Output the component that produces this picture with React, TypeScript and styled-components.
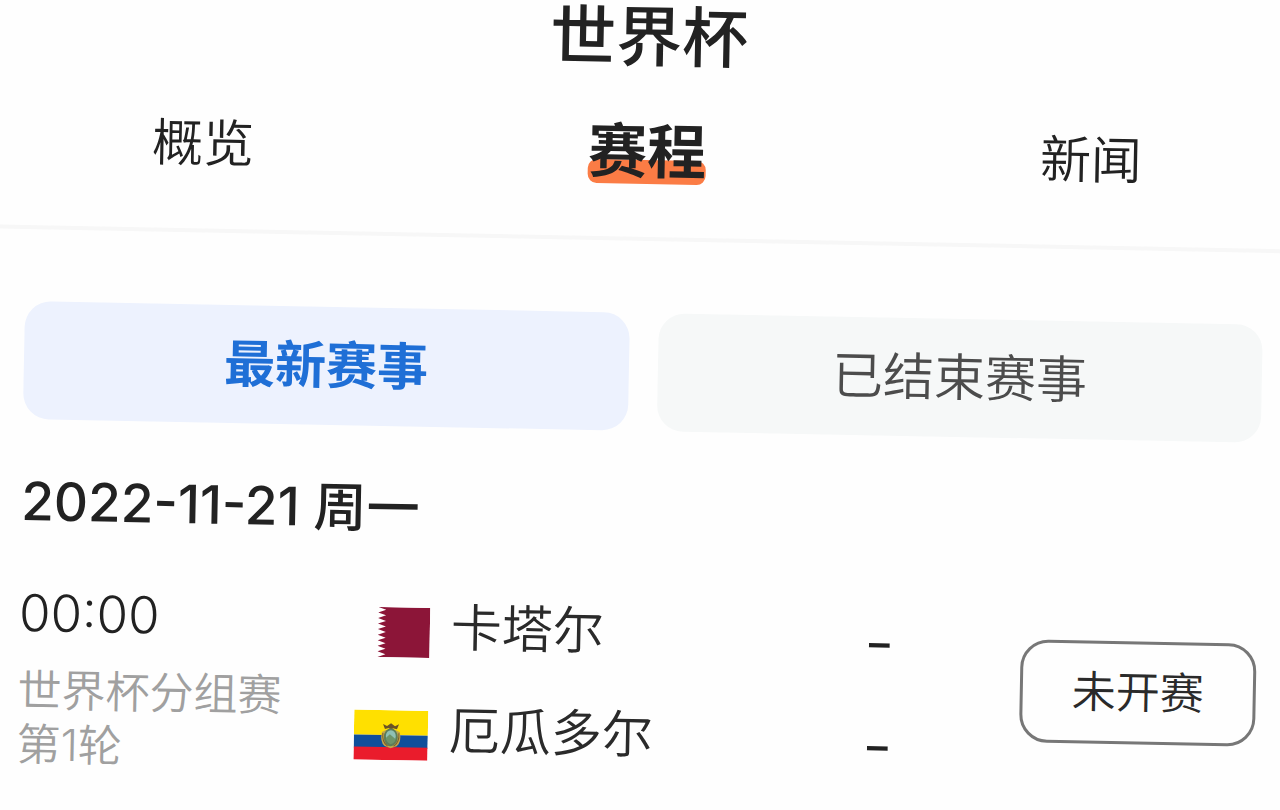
import React from "react";
import styled, { createGlobalStyle } from "styled-components";

const GlobalStyle = createGlobalStyle`
  *, *::before, *::after { box-sizing: border-box; }
  body {
    margin: 0;
    background: #fefefe;
    color: #222;
    font-family: Inter, "Noto Sans CJK SC", sans-serif;
    font-size: 51px;
    line-height: 64px;
  }
`;

const Viewport = styled.div`
  min-height: 100vh;
  overflow: hidden;
`;

/* The whole sheet leans slightly clockwise, so it is a bit wider than the window. */
const Sheet = styled.div`
  width: calc(100% + 20px);
  transform: rotate(1.1deg);
  transform-origin: top center;
`;

const Header = styled.header`
  border-bottom: 4px solid #f7f7f7;
`;

const Title = styled.h1`
  margin: 0;
  font-size: 66px;
  line-height: 74px;
  font-weight: 500;
  text-align: center;
`;

const Tabs = styled.nav`
  display: flex;
  align-items: center;
  justify-content: space-between;
  padding: 46px 155px 53px;
`;

const Tab = styled.a<{ $active?: boolean }>`
  position: relative;
  isolation: isolate;
  color: #222;
  text-decoration: none;
  font-size: ${(p) => (p.$active ? 59 : 51)}px;
  font-weight: ${(p) => (p.$active ? 700 : 350)};

  &::before {
    content: "";
    display: ${(p) => (p.$active ? "block" : "none")};
    position: absolute;
    z-index: -1;
    left: 0;
    right: 0;
    bottom: 0;
    height: 24px;
    border-radius: 9px;
    background: #fb7c45;
  }
`;

const Main = styled.main`
  padding: 72px 31px 16px;
`;

const Filters = styled.div`
  display: grid;
  grid-template-columns: 1fr 1fr;
  gap: 29px;
`;

const Filter = styled.button<{ $active?: boolean }>`
  height: 118px;
  padding: 0;
  border: 0;
  border-radius: 26px;
  font: inherit;
  font-weight: ${(p) => (p.$active ? 700 : 350)};
  color: ${(p) => (p.$active ? "#1f6fd6" : "#4c4c4c")};
  background: ${(p) => (p.$active ? "#edf2fe" : "#f6f8f8")};
`;

const DateHeading = styled.h2`
  margin: 50px 0 40px;
  font-size: 53px;
  font-weight: 500;
`;

const Match = styled.article`
  display: grid;
  grid-template-columns: 336px 1fr 236px;
`;

const Info = styled.div`
  padding-top: 12px;
`;

const Kickoff = styled.time`
  display: block;
  line-height: 56px;
  font-weight: 300;
`;

const Stage = styled.p`
  margin: 22px 0 0;
  font-size: 44px;
  line-height: 54px;
  font-weight: 350;
  color: #a0a0a0;
`;

const Teams = styled.div`
  padding-right: 126px;
`;

const Team = styled.div`
  display: flex;
  align-items: center;
  gap: 21px;
  height: 103px;
`;

const FlagSlot = styled.span`
  display: flex;
  justify-content: flex-end;
  width: 75px;
`;

const Name = styled.span`
  flex: 1;
  padding-bottom: 10px;
  font-weight: 350;
  color: #2a2a2a;
`;

const Score = styled.span`
  font-size: 68px;
  font-weight: 300;
`;

const Status = styled.button`
  align-self: center;
  height: 103px;
  margin-bottom: 10px;
  padding: 0;
  border: 3px solid #777;
  border-radius: 28px;
  background: transparent;
  font: inherit;
  font-size: 44px;
  font-weight: 350;
  color: #2a2a2a;
`;

const QatarFlag = () => (
  <svg width="52" height="50" viewBox="0 0 52 50" role="img" aria-label="卡塔尔国旗">
    <rect width="52" height="50" fill="#fff" />
    <path
      d="M0 0H52V50H0L8 47.2L0 44.4L8 41.7L0 38.9L8 36.1L0 33.3L8 30.6L0 27.8L8 25L0 22.2L8 19.4L0 16.7L8 13.9L0 11.1L8 8.3L0 5.6L8 2.8Z"
      fill="#8c1538"
    />
  </svg>
);

const EcuadorFlag = () => (
  <svg width="74" height="50" viewBox="0 0 74 50" role="img" aria-label="厄瓜多尔国旗">
    <rect width="74" height="25" fill="#ffe000" />
    <rect y="25" width="74" height="13" fill="#104f9b" />
    <rect y="37" width="74" height="13" fill="#ea1c2c" />
    <path d="M28 22Q26 32 31 36L37 38L43 36Q48 32 46 22L42 20H32Z" fill="#c4a64a" />
    <path d="M29 14L33 16L37 13L41 16L45 14L43 19L39 18L37 20L35 18L31 19Z" fill="#6b5324" />
    <ellipse cx="37" cy="27" rx="7" ry="9" fill="#5d7d58" />
    <ellipse cx="37" cy="26" rx="5" ry="6" fill="#8fc0b4" />
    <path d="M32 28L36 24L42 29Q41 33 37 34Q33 33 32 28Z" fill="#6d9468" />
    <path d="M29 23Q28 32 34 36M45 23Q46 32 40 36" fill="none" stroke="#7a5f2c" strokeWidth="1" />
  </svg>
);

export default function App() {
  return (
    <Viewport>
      <GlobalStyle />
      <Sheet>
        <Header>
          <Title>世界杯</Title>
          <Tabs>
            <Tab href="#overview">概览</Tab>
            <Tab href="#schedule" $active aria-current="page">赛程</Tab>
            <Tab href="#news">新闻</Tab>
          </Tabs>
        </Header>
        <Main>
          <Filters>
            <Filter type="button" $active aria-pressed="true">最新赛事</Filter>
            <Filter type="button" aria-pressed="false">已结束赛事</Filter>
          </Filters>
          <DateHeading>2022-11-21 周一</DateHeading>
          <Match>
            <Info>
              <Kickoff dateTime="2022-11-21T00:00">00:00</Kickoff>
              <Stage>世界杯分组赛<br />第1轮</Stage>
            </Info>
            <Teams>
              <Team>
                <FlagSlot><QatarFlag /></FlagSlot>
                <Name>卡塔尔</Name>
                <Score>-</Score>
              </Team>
              <Team>
                <FlagSlot><EcuadorFlag /></FlagSlot>
                <Name>厄瓜多尔</Name>
                <Score>-</Score>
              </Team>
            </Teams>
            <Status type="button">未开赛</Status>
          </Match>
        </Main>
      </Sheet>
    </Viewport>
  );
}
